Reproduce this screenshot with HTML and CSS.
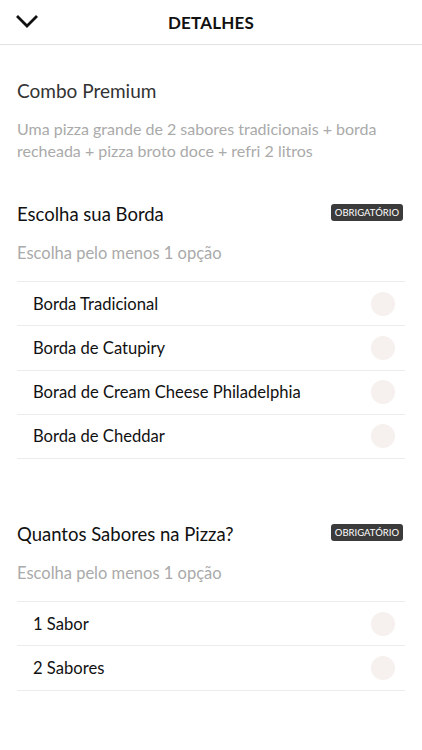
FILE: index.html
```html
<!DOCTYPE html>
<html lang="pt-BR">
<head>
    <meta charset="UTF-8">
    <meta name="viewport" content="width=device-width, initial-scale=1.0">
    <title>Detalhes</title>
    <link rel="stylesheet" href="styles.css">
</head>
<body>

    <header class="topo">
        <button class="voltar" aria-label="Fechar">
            <svg width="22" height="14" viewBox="0 0 22 14">
                <path d="M2 2 L11 11 L20 2" fill="none" stroke="#111" stroke-width="2.8" stroke-linecap="square"/>
            </svg>
        </button>
        <h1>DETALHES</h1>
    </header>

    <main>
        <section class="produto">
            <h2>Combo Premium</h2>
            <p>Uma pizza grande de 2 sabores tradicionais + borda recheada + pizza broto doce + refri 2 litros</p>
        </section>

        <section class="grupo">
            <div class="grupo-cabecalho">
                <h3>Escolha sua Borda</h3>
                <span class="badge">OBRIGATÓRIO</span>
            </div>
            <p class="grupo-info">Escolha pelo menos 1 opção</p>
            <ul class="opcoes">
                <li><span>Borda Tradicional</span><i class="radio"></i></li>
                <li><span>Borda de Catupiry</span><i class="radio"></i></li>
                <li><span>Borad de Cream Cheese Philadelphia</span><i class="radio"></i></li>
                <li><span>Borda de Cheddar</span><i class="radio"></i></li>
            </ul>
        </section>

        <section class="grupo">
            <div class="grupo-cabecalho">
                <h3>Quantos Sabores na Pizza?</h3>
                <span class="badge">OBRIGATÓRIO</span>
            </div>
            <p class="grupo-info">Escolha pelo menos 1 opção</p>
            <ul class="opcoes">
                <li><span>1 Sabor</span><i class="radio"></i></li>
                <li><span>2 Sabores</span><i class="radio"></i></li>
            </ul>
        </section>
    </main>

</body>
</html>
```

FILE: styles.css
```css
body {
    font-family: 'Lato', 'Noto Sans', sans-serif;
    margin: 0;
    padding: 0;
    color: #111;
    background: #fff;
}

.topo {
    height: 44px;
    border-bottom: 1px solid #e2e2e2;
    display: flex;
    align-items: center;
    justify-content: center;
    position: relative;
}

.voltar {
    position: absolute;
    left: 16px;
    top: 15px;
    background: none;
    border: 0;
    padding: 0;
    line-height: 0;
}

.topo h1 {
    margin: 0;
    font-size: 17px;
    font-weight: 700;
    letter-spacing: 0.2px;
}

main {
    padding: 0 17px;
}

.produto {
    padding-top: 33px;
}

.produto h2 {
    margin: 0;
    font-size: 19px;
    font-weight: 400;
    color: #333;
    line-height: 26px;
}

.produto p {
    margin: 14px 0 0 0;
    font-size: 16px;
    line-height: 22px;
    color: #aaa;
}

.grupo {
    margin-top: 40px;
}

.grupo + .grupo {
    margin-top: 63px;
}

.grupo-cabecalho {
    display: flex;
    align-items: center;
    justify-content: space-between;
    height: 24px;
}

.grupo-cabecalho h3 {
    margin: 0;
    font-size: 18.5px;
    font-weight: 400;
    color: #111;
}

.badge {
    background: #3b3b3b;
    color: #fff;
    font-size: 9.5px;
    border-radius: 3px;
    padding: 3px 4px;
    margin-right: 2px;
    margin-top: -4px;
}

.grupo-info {
    margin: 17px 0 0 0;
    font-size: 16.5px;
    line-height: 20px;
    color: #aaa;
}

.opcoes {
    list-style: none;
    padding: 0;
    margin: 18px 0 0 0;
    border-top: 1px solid #ececec;
}

.opcoes li {
    height: 43.25px;
    border-bottom: 1px solid #ececec;
    display: flex;
    align-items: center;
    justify-content: space-between;
    padding: 0 10px 0 16px;
    font-size: 16.6px;
}

.radio {
    width: 24px;
    height: 24px;
    border-radius: 50%;
    background: #f6f1ee;
}
```
